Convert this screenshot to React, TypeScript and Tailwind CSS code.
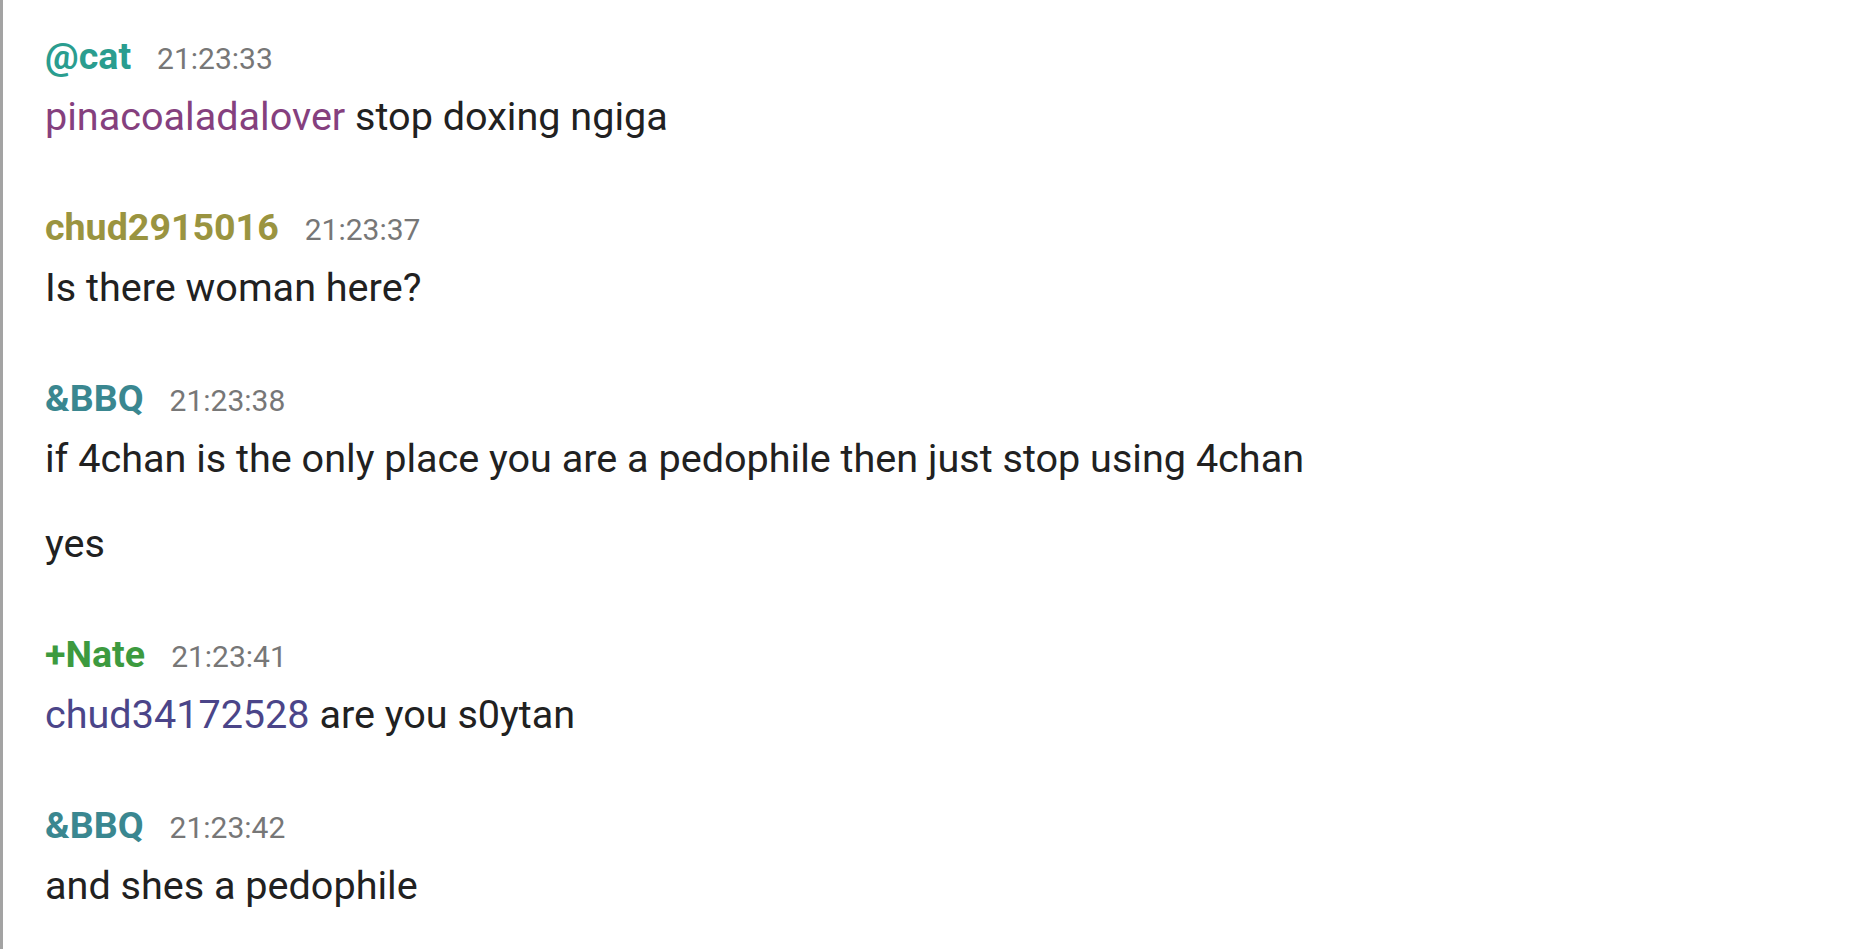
const groups = [
  {
    name: "@cat",
    color: "text-[#2a9d8f]",
    time: "21:23:33",
    messages: [
      { mention: "pinacoaladalover", mentionColor: "text-[#85407e]", text: " stop doxing ngiga" },
    ],
  },
  {
    name: "chud2915016",
    color: "text-[#9a9440]",
    time: "21:23:37",
    messages: [{ text: "Is there woman here?" }],
  },
  {
    name: "&BBQ",
    color: "text-[#3a8790]",
    time: "21:23:38",
    messages: [
      { text: "if 4chan is the only place you are a pedophile then just stop using 4chan" },
      { text: "yes" },
    ],
  },
  {
    name: "+Nate",
    color: "text-[#3d9a3f]",
    time: "21:23:41",
    messages: [
      { mention: "chud34172528", mentionColor: "text-[#4b4589]", text: " are you s0ytan" },
    ],
  },
  {
    name: "&BBQ",
    color: "text-[#3a8790]",
    time: "21:23:42",
    messages: [{ text: "and shes a pedophile" }],
  },
];

type Msg = { mention?: string; mentionColor?: string; text: string };

const Group = ({ name, color, time, messages }: { name: string; color: string; time: string; messages: Msg[] }) => {
  return (
    <div className="flex flex-col">
      <div className="flex items-baseline h-[40px]">
        <span className={`font-bold text-[37.6px] leading-[40px] ${color}`}>{name}</span>
        <span className="ml-[26px] text-[30px] leading-[40px] text-[#777777]">{time}</span>
      </div>
      <div className="mt-[18px] flex flex-col gap-[39px]">
        {messages.map((m, i) => (
          <div key={i} className="text-[39.6px] leading-[46px] text-[#212121] whitespace-nowrap">
            {m.mention && <span className={m.mentionColor}>{m.mention}</span>}
            {m.text}
          </div>
        ))}
      </div>
    </div>
  );
};

const App = () => {
  return (
    <div
      className="w-[1856px] h-[949px] overflow-hidden bg-white border-l-[3px] border-[#a3a3a3] pl-[42px] pt-[36px] flex flex-col gap-[67px]"
      style={{ fontFamily: "Roboto, 'Noto Sans', sans-serif" }}
    >
      {groups.map((g, i) => (
        <Group key={i} {...g} />
      ))}
    </div>
  );
};

export default App;
